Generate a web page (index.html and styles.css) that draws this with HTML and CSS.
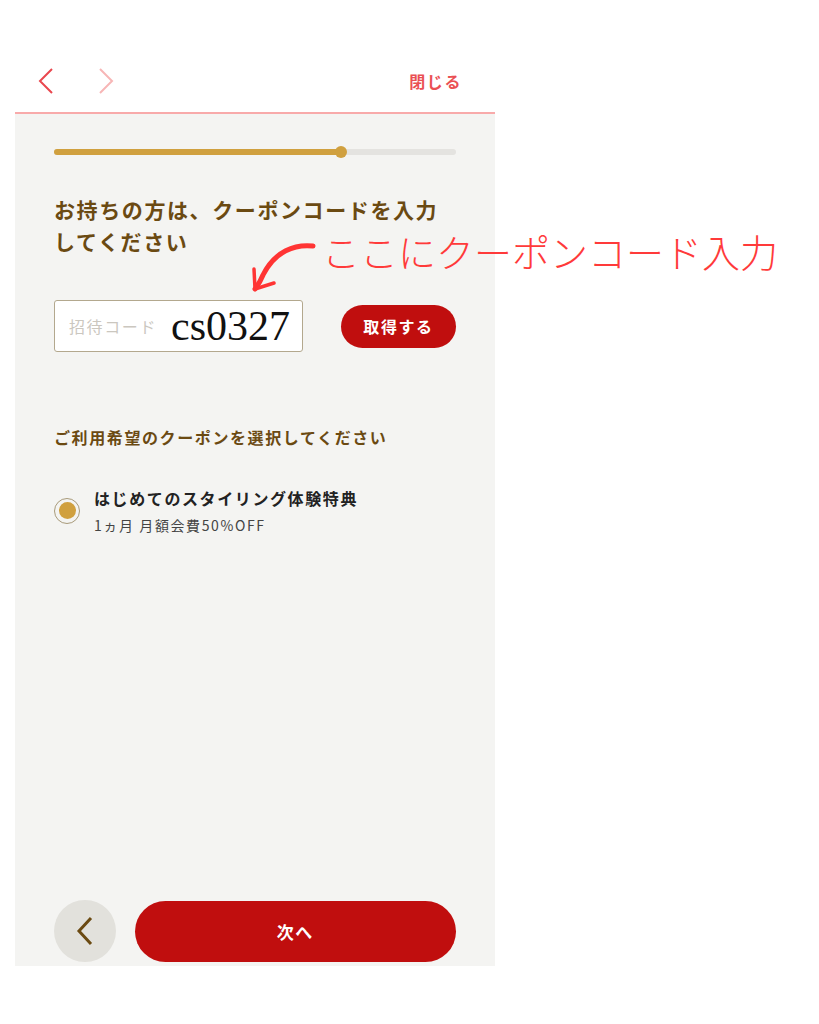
FILE: index.html
```html
<!DOCTYPE html>
<html lang="ja">
<head>
  <meta charset="UTF-8">
  <meta name="viewport" content="width=device-width, initial-scale=1.0">
  <title>クーポンコード入力</title>
  <link rel="stylesheet" href="styles.css">
</head>
<body>
  <div class="phone">
    <div class="header">
      <div class="nav">
        <svg class="nav-icon" width="16" height="26" viewBox="0 0 16 26"><polyline points="14,1 2,13 14,25" fill="none" stroke="#e9474e" stroke-width="2"/></svg>
        <svg class="nav-icon off" width="16" height="26" viewBox="0 0 16 26"><polyline points="2,1 14,13 2,25" fill="none" stroke="#f7b6b6" stroke-width="2"/></svg>
      </div>
      <span class="close">閉じる</span>
    </div>
    <div class="main">
      <div class="progress">
        <div class="progress-fill"><span class="progress-dot"></span></div>
      </div>
      <h1 class="title">お持ちの方は、クーポンコードを入力<br>してください</h1>
      <div class="code-row">
        <div class="code-input">
          <span class="placeholder">招待コード</span>
          <span class="code-value">cs0327</span>
        </div>
        <button class="get-btn">取得する</button>
      </div>
      <p class="label">ご利用希望のクーポンを選択してください</p>
      <div class="coupon">
        <span class="radio"><span class="radio-dot"></span></span>
        <div class="coupon-text">
          <div class="coupon-name">はじめてのスタイリング体験特典</div>
          <div class="coupon-sub">1ヵ月 月額会費50%OFF</div>
        </div>
      </div>
      <div class="footer">
        <button class="back-btn">
          <svg width="18" height="30" viewBox="0 0 18 30"><polyline points="15,2 3,15 15,28" fill="none" stroke="#6b4a12" stroke-width="3"/></svg>
        </button>
        <button class="next-btn">次へ</button>
      </div>
    </div>
  </div>

  <!-- 注釈 -->
  <svg class="note-arrow" width="80" height="70" viewBox="0 0 80 70">
    <path d="M68 11 C50 9 30 16 18 40 C16 45 13 50 10 54" fill="none" stroke="#ff3434" stroke-width="5" stroke-linecap="round"/>
    <path d="M10 54 L9 34 M10 54 L29 48" fill="none" stroke="#ff3434" stroke-width="3.5" stroke-linecap="round"/>
  </svg>
  <div class="note-text">ここにクーポンコード入力</div>
</body>
</html>
```

FILE: styles.css
```css
* {
  box-sizing: border-box;
}
body {
  margin: 0;
  background-color: #fff;
  font-family: "Noto Sans CJK JP", "Noto Sans", sans-serif;
  letter-spacing: 0.1em;
}
.phone {
  width: 480px;
  margin-left: 15px;
}
.header {
  display: flex;
  align-items: center;
  justify-content: space-between;
  height: 114px;
  padding: 50px 33px 0 23px;
  border-bottom: 2px solid #f8aaaa;
  background-color: #fff;
}
.nav {
  display: flex;
  gap: 44px;
}
.nav-icon {
  display: block;
}
.close {
  font-size: 16px;
  font-weight: 700;
  color: #ea5054;
}
.main {
  display: flex;
  flex-direction: column;
  height: 852px;
  padding: 35px 39px 4px 39px;
  background-color: #f4f4f2;
}
.progress {
  height: 6px;
  border-radius: 3px;
  background-color: #e4e3e0;
}
.progress-fill {
  position: relative;
  width: 71.5%;
  height: 6px;
  border-radius: 3px;
  background-color: #d0a03f;
}
.progress-dot {
  position: absolute;
  right: -6px;
  top: -3px;
  width: 12px;
  height: 12px;
  border-radius: 50%;
  background-color: #d0a03f;
}
.title {
  margin: 38px 0 0;
  font-size: 21px;
  line-height: 32px;
  font-weight: 700;
  color: #6b4a12;
}
.code-row {
  display: flex;
  align-items: center;
  justify-content: space-between;
  margin-top: 43px;
}
.code-input {
  display: flex;
  align-items: center;
  width: 249px;
  height: 52px;
  padding-left: 14px;
  border: 1.5px solid #b3a88e;
  border-radius: 3px;
  background-color: #fff;
}
.placeholder {
  font-size: 16px;
  color: #cbc7bf;
}
.code-value {
  margin-left: 14px;
  font-family: "Liberation Serif", serif;
  font-size: 42px;
  letter-spacing: 0;
  color: #111;
}
.get-btn {
  width: 115px;
  height: 43px;
  border: none;
  border-radius: 22px;
  background-color: #c00e0e;
  color: #fff;
  font-family: inherit;
  font-size: 16px;
  font-weight: 700;
  letter-spacing: 0.1em;
}
.label {
  margin: 73px 0 0;
  font-size: 16px;
  line-height: 24px;
  font-weight: 700;
  color: #6b4a12;
}
.coupon {
  display: flex;
  align-items: center;
  gap: 14px;
  margin-top: 37px;
}
.radio {
  display: flex;
  align-items: center;
  justify-content: center;
  width: 26px;
  height: 26px;
  border: 1.5px solid #a89a7a;
  border-radius: 50%;
}
.radio-dot {
  width: 17px;
  height: 17px;
  border-radius: 50%;
  background-color: #d0a03f;
}
.coupon-name {
  font-size: 16px;
  line-height: 24px;
  font-weight: 700;
  color: #222;
}
.coupon-sub {
  margin-top: 5px;
  font-size: 14px;
  line-height: 20px;
  color: #444;
}
.footer {
  display: flex;
  align-items: center;
  gap: 19px;
  margin-top: auto;
}
.back-btn {
  display: flex;
  align-items: center;
  justify-content: center;
  width: 62px;
  height: 62px;
  border: none;
  border-radius: 50%;
  background-color: #e2e1dc;
}
.next-btn {
  width: 323px;
  height: 61px;
  border: none;
  border-radius: 31px;
  background-color: #c00e0e;
  color: #fff;
  font-family: inherit;
  font-size: 17px;
  font-weight: 700;
  letter-spacing: 0.1em;
}
.note-arrow {
  position: absolute;
  left: 245px;
  top: 235px;
}
.note-text {
  position: absolute;
  left: 322px;
  top: 226px;
  font-size: 38px;
  line-height: 50px;
  font-weight: 300;
  letter-spacing: 0;
  color: #ff3a3a;
  white-space: nowrap;
}
```
